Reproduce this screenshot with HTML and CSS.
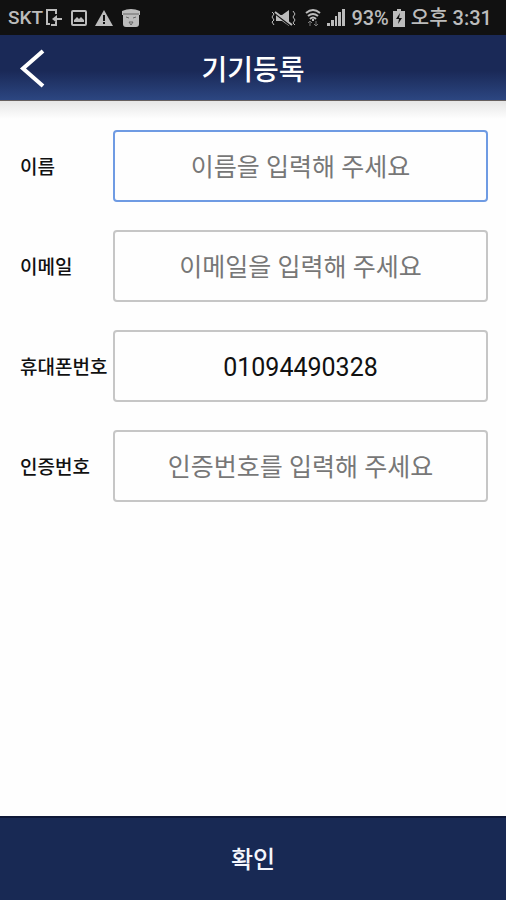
FILE: index.html
```html
<!DOCTYPE html>
<html lang="ko">
<head>
<meta charset="utf-8">
<meta name="viewport" content="width=device-width, initial-scale=1">
<title>기기등록</title>
<link rel="stylesheet" href="styles.css">
</head>
<body>
<div class="status">
  <div class="status-group">
    <span class="carrier">SKT</span>
    <svg width="18" height="20" viewBox="0 0 18 20" aria-hidden="true">
      <path d="M11 6V2H2v14h3M11 14v3H6" fill="none" stroke="currentColor" stroke-width="2"/>
      <path d="M7 11l5-4v3h5v2h-5v3z" fill="currentColor"/>
    </svg>
    <svg class="picture" width="16" height="18" viewBox="0 0 16 18" aria-hidden="true">
      <rect x="1" y="2" width="14" height="14" rx="1" fill="none" stroke="currentColor" stroke-width="2"/>
      <path d="M3 13v-2l3-3 2 2 2-2 3 3v2z" fill="currentColor"/>
    </svg>
    <svg class="warning" width="18" height="18" viewBox="0 0 18 18" aria-hidden="true">
      <path d="M9 1l9 16H0z" fill="currentColor"/>
      <path d="M9 6v6M9 13v2" stroke="#111" stroke-width="2"/>
    </svg>
    <svg class="app" width="20" height="20" viewBox="0 0 20 20" aria-hidden="true">
      <path d="M1 3q9-4 18 0v4H1zM2 7h16v9q0 3-3 3H5q-3 0-3-3z" fill="currentColor"/>
      <path d="M2 6h16M5 9l3 1M15 9l-3 1M8 14h4l-2 3z" fill="none" stroke="#666" stroke-width="1"/>
    </svg>
  </div>
  <div class="status-group">
    <svg width="26" height="18" viewBox="0 0 26 18" aria-hidden="true">
      <path d="M5 6h6l7-5v16l-7-5H5z" fill="currentColor"/>
      <path d="M5 5l15 12" stroke="#111" stroke-width="2"/>
      <path d="M4 3l17 13" stroke="currentColor" stroke-width="2"/>
      <path d="M1 3l2 2-2 3 2 3-2 2 2 3M22 2l2 3-2 3 2 3-2 3 2 2" fill="none" stroke="currentColor" stroke-width="1"/>
    </svg>
    <svg class="wifi" width="16" height="19" viewBox="0 0 16 19" aria-hidden="true">
      <path d="M1 5q7-6 14 0M3 8q5-4 10 0M5 11q3-3 6 0" fill="none" stroke="currentColor" stroke-width="2"/>
      <path d="M7 11h2v2H7z" fill="currentColor"/>
      <path d="M5 18v-5M3 15l2-2 2 2M11 13v5M9 16l2 2 2-2" fill="none" stroke="#777" stroke-width="1"/>
    </svg>
    <svg class="signal" width="18" height="19" viewBox="0 0 18 19" aria-hidden="true">
      <path d="M0 15h3v3H0zM4 12h3v6H4zM8 8h2v10H8zM11 4h3v14h-3zM15 1h3v17h-3z" fill="currentColor"/>
    </svg>
    <span class="percent">93%</span>
    <svg class="battery" width="12" height="18" viewBox="0 0 12 18" aria-hidden="true">
      <path d="M4 0h4v2h4v16H0V2h4z" fill="currentColor"/>
      <path d="M7 4L3 10h3l-1 5 4-6H6z" fill="#111"/>
    </svg>
    <span class="clock">오후 3:31</span>
  </div>
</div>
<header class="header">
  <button class="back" type="button" aria-label="뒤로">
    <svg width="28" height="40" viewBox="0 0 28 40" aria-hidden="true">
      <path d="M25 3L5 20.500L25 38" fill="none" stroke="currentColor" stroke-width="4"/>
    </svg>
  </button>
  <h1 class="title">기기등록</h1>
</header>
<form class="form" id="register">
  <div class="row">
    <label class="label" for="name">이름</label>
    <input class="field field-active" id="name" type="text" placeholder="이름을 입력해 주세요">
  </div>
  <div class="row">
    <label class="label" for="email">이메일</label>
    <input class="field" id="email" type="email" placeholder="이메일을 입력해 주세요">
  </div>
  <div class="row">
    <label class="label" for="phone">휴대폰번호</label>
    <input class="field" id="phone" type="tel" value="01094490328">
  </div>
  <div class="row">
    <label class="label" for="code">인증번호</label>
    <input class="field" id="code" type="text" placeholder="인증번호를 입력해 주세요">
  </div>
</form>
<button class="confirm" type="submit" form="register">확인</button>
</body>
</html>
```
FILE: styles.css
```css
* {
  box-sizing: border-box;
}

body {
  margin: 0;
  min-height: 100vh;
  display: flex;
  flex-direction: column;
  background: #fefefe;
  color: #111;
  font-family: Roboto, "Noto Sans CJK KR", sans-serif;
}

.status {
  display: flex;
  justify-content: space-between;
  align-items: center;
  height: 35px;
  padding: 0 14px 0 8px;
  background: #111;
  color: #bcbcbc;
  font-size: 20px;
  font-weight: 500;
  line-height: 34px;
  white-space: nowrap;
}

.status-group {
  display: flex;
  align-items: center;
}

.status svg {
  flex: none;
}

.carrier {
  margin-right: 2px;
  font-size: 19px;
}

.picture,
.warning,
.app {
  margin-left: 8px;
}

.wifi {
  margin-left: 8px;
}

.signal,
.percent {
  margin-left: 6px;
}

.battery {
  margin: 0 6px 0 4px;
}

.header {
  display: grid;
  grid-template-columns: 64px 1fr 64px;
  align-items: center;
  height: 66px;
  background: linear-gradient(#1a2957 0%, #1a2957 55%, #2c4681 100%);
  border-bottom: 1px solid #66605f;
  color: #fff;
}

.back {
  display: flex;
  justify-content: center;
  padding: 0;
  border: 0;
  background: none;
  color: inherit;
}

.title {
  grid-column: 2;
  margin: 0;
  padding-top: 6px;
  font-size: 28px;
  font-weight: 500;
  line-height: 40px;
  text-align: center;
}

.form {
  flex: 1;
  display: flex;
  flex-direction: column;
  gap: 28px;
  padding: 29px 18px 29px 20px;
  background: linear-gradient(#e6e6e6, #fefefe 18px);
}

.row {
  display: grid;
  grid-template-columns: 93px 1fr;
  align-items: center;
}

.label {
  padding-top: 4px;
  font-size: 19px;
  font-weight: 500;
  line-height: 28px;
  white-space: nowrap;
}

.field {
  width: 100%;
  min-width: 0;
  height: 72px;
  padding: 2px 12px 0;
  border: 2px solid #c6c6c6;
  border-radius: 4px;
  outline: 0;
  background: #fefefe;
  color: #111;
  font: 25px/36px Roboto, "Noto Sans CJK KR", sans-serif;
  text-align: center;
}

.field::placeholder {
  color: #777;
  opacity: 1;
}

.field-active,
.field:focus {
  border-color: #6f9be3;
}

.confirm {
  height: 84px;
  padding: 0 0 2px;
  border: 0;
  border-top: 2px solid #0e1838;
  background: #182954;
  color: #f4f6fc;
  font: 500 24px/36px "Noto Sans CJK KR", sans-serif;
}
```
